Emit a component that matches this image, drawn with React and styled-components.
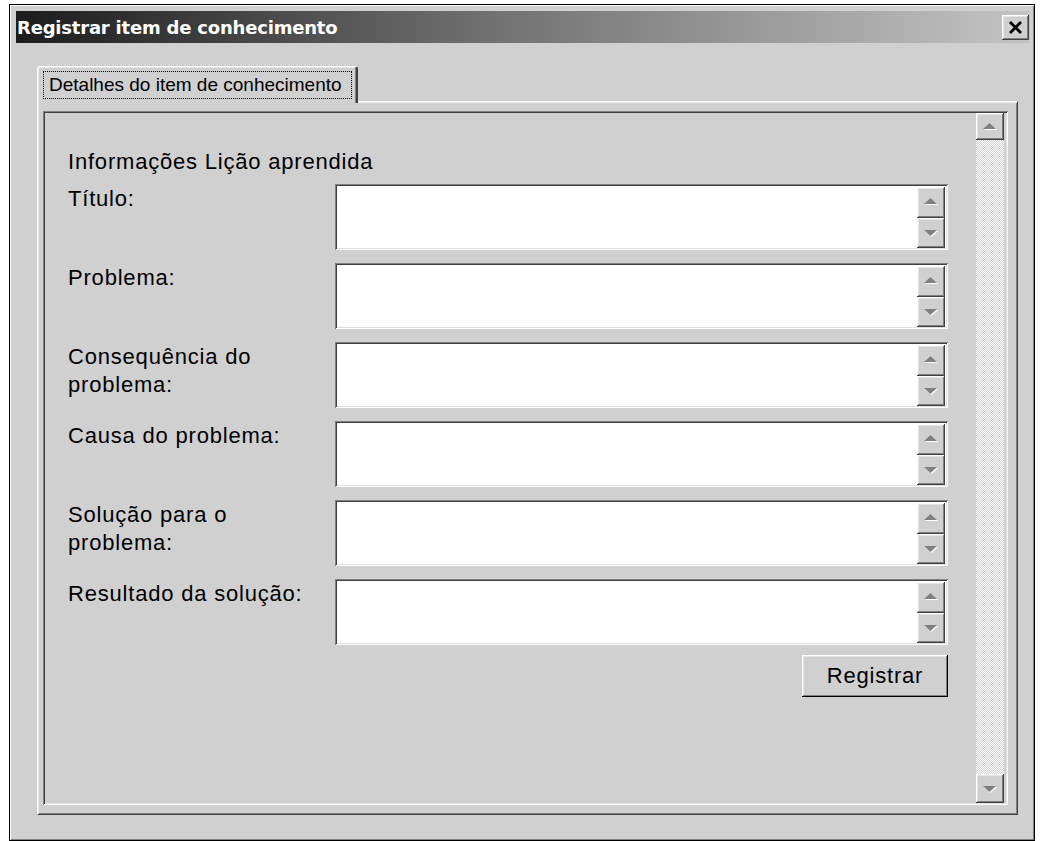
import React from "react";
import styled, { createGlobalStyle, css } from "styled-components";

const FACE = "#d0d0d0";
const LIGHT = "#ffffff";
const SHADOW = "#808080";
const DARK = "#404040";

const GlobalStyle = createGlobalStyle`
    html, body {
        margin: 0;
        padding: 0;
        background: #ffffff;
    }
    body {
        font-family: "Liberation Sans", Arial, sans-serif;
        color: #000;
    }
`;

const raised = css`
    background: ${FACE};
    box-shadow: inset -1px -1px ${DARK}, inset 1px 1px ${LIGHT},
        inset -2px -2px ${SHADOW}, inset 2px 2px #e4e4e4;
`;

const sunken = css`
    box-shadow: inset 1px 1px ${SHADOW}, inset -1px -1px ${LIGHT},
        inset 2px 2px ${DARK}, inset -2px -2px #e0e0e0;
`;

const Window = styled.div`
    box-sizing: border-box;
    margin: 4px 0 0 9px;
    width: 1026px;
    height: 837px;
    border: 1px solid #000;
    background: ${FACE};
    box-shadow: inset 1px 1px ${LIGHT}, inset -1px -1px ${SHADOW};
    padding: 6px 4px 6px 6px;
    display: flex;
    flex-direction: column;
`;

const TitleBar = styled.div`
    height: 32px;
    display: flex;
    align-items: center;
    justify-content: space-between;
    padding: 0 1px 0 1px;
    background: linear-gradient(to right, #1c1c1c 0%, #6e6e6e 45%, #c4c4c4 100%);
`;

const Title = styled.span`
    font-family: "DejaVu Sans", sans-serif;
    font-weight: bold;
    font-size: 18px;
    color: #fff;
    letter-spacing: -0.2px;
`;

const CloseButton = styled.button`
    ${raised};
    width: 27px;
    height: 25px;
    border: none;
    padding: 0;
    display: flex;
    align-items: center;
    justify-content: center;
`;

const Body = styled.div`
    flex: 1;
    display: flex;
    flex-direction: column;
    padding: 23px 12px 19px 21px;
`;

const TabStrip = styled.div`
    display: flex;
    position: relative;
    z-index: 1;
    margin-bottom: -2px;
`;

const Tab = styled.div`
    box-sizing: border-box;
    width: 321px;
    height: 37px;
    padding: 4px 4px 4px 5px;
    background: ${FACE};
    border-top: 1px solid ${LIGHT};
    border-left: 1px solid ${LIGHT};
    border-right: 2px solid ${DARK};
    border-top-left-radius: 3px;
    border-top-right-radius: 3px;
    box-shadow: inset 1px 1px #e8e8e8, inset -1px 0 ${SHADOW};
`;

const FocusRect = styled.div`
    box-sizing: border-box;
    height: 28px;
    border: 1px dotted #000;
    display: flex;
    align-items: center;
    padding-left: 5px;
    font-size: 19px;
    white-space: nowrap;
`;

const Panel = styled.div`
    flex: 1;
    display: flex;
    box-sizing: border-box;
    border-top: 1px solid ${LIGHT};
    border-left: 1px solid ${LIGHT};
    border-right: 1px solid ${DARK};
    border-bottom: 1px solid ${DARK};
    box-shadow: inset 1px 1px #e8e8e8, inset -1px -1px ${SHADOW};
    padding: 9px 9px 9px 5px;
`;

const ScrollFrame = styled.div`
    ${sunken};
    flex: 1;
    display: flex;
    padding: 2px 4px 2px 2px;
`;

const Content = styled.div`
    flex: 1;
    padding: 35px 0 0 23px;
    font-size: 22px;
    letter-spacing: 0.8px;
    line-height: 28px;
`;

const Heading = styled.div`
    margin-bottom: 8px;
`;

const Form = styled.div`
    display: grid;
    grid-template-columns: 267px 613px;
    row-gap: 13px;
`;

const Label = styled.div`
    padding-top: 1px;
`;

const TextBox = styled.div`
    ${sunken};
    background: #fff;
    height: 66px;
    display: flex;
    justify-content: flex-end;
    padding: 3px 3px 2px 2px;
    box-sizing: border-box;
`;

const SpinColumn = styled.div`
    width: 28px;
    display: flex;
    flex-direction: column;
`;

const ArrowButton = styled.div`
    ${raised};
    flex: ${(p) => (p.$flex ? 1 : "none")};
    height: ${(p) => (p.$height ? `${p.$height}px` : "auto")};
    display: flex;
    align-items: center;
    justify-content: center;
`;

const Actions = styled.div`
    grid-column: 2;
    display: flex;
    justify-content: flex-end;
    margin-top: -3px;
`;

const PushButton = styled.button`
    ${raised};
    box-shadow: inset -1px -1px #000, inset 1px 1px ${LIGHT},
        inset -2px -2px ${SHADOW}, inset 2px 2px #e4e4e4;
    width: 146px;
    height: 42px;
    border: none;
    font-family: "Liberation Sans", Arial, sans-serif;
    font-size: 22px;
    letter-spacing: 0.8px;
    color: #000;
    padding: 0;
`;

const ScrollBar = styled.div`
    width: 28px;
    display: flex;
    flex-direction: column;
`;

const Track = styled.div`
    flex: 1;
    background-color: ${LIGHT};
    background-image: repeating-conic-gradient(${FACE} 0% 25%, ${LIGHT} 0% 50%);
    background-size: 2px 2px;
`;

// disabled arrow: grey triangle with a white drop shadow
const Arrow = ({ down }) => (
    <svg width="16" height="10" viewBox="0 0 16 10">
        {down ? (
            <>
                <polygon points="2,3 15,3 8.5,9" fill={LIGHT} />
                <polygon points="1,2 14,2 7.5,8" fill={SHADOW} />
            </>
        ) : (
            <>
                <polygon points="8.5,2 15,8 2,8" fill={LIGHT} />
                <polygon points="7.5,1 14,7 1,7" fill={SHADOW} />
            </>
        )}
    </svg>
);

const CloseGlyph = () => (
    <svg width="15" height="13" viewBox="0 0 15 13">
        <path d="M2 1 L13 12 M13 1 L2 12" stroke="#000" strokeWidth="2.8" />
    </svg>
);

const fields = [
    ["Título:"],
    ["Problema:"],
    ["Consequência do", "problema:"],
    ["Causa do problema:"],
    ["Solução para o", "problema:"],
    ["Resultado da solução:"],
];

const App = () => (
    <>
        <GlobalStyle />
        <Window>
            <TitleBar>
                <Title>Registrar item de conhecimento</Title>
                <CloseButton aria-label="Fechar">
                    <CloseGlyph />
                </CloseButton>
            </TitleBar>
            <Body>
                <TabStrip>
                    <Tab>
                        <FocusRect>Detalhes do item de conhecimento</FocusRect>
                    </Tab>
                </TabStrip>
                <Panel>
                    <ScrollFrame>
                        <Content>
                            <Heading>Informações Lição aprendida</Heading>
                            <Form>
                                {fields.map((lines) => (
                                    <React.Fragment key={lines[0]}>
                                        <Label>
                                            {lines.map((line) => (
                                                <div key={line}>{line}</div>
                                            ))}
                                        </Label>
                                        <TextBox>
                                            <SpinColumn>
                                                <ArrowButton $flex>
                                                    <Arrow />
                                                </ArrowButton>
                                                <ArrowButton $flex>
                                                    <Arrow down />
                                                </ArrowButton>
                                            </SpinColumn>
                                        </TextBox>
                                    </React.Fragment>
                                ))}
                                <Actions>
                                    <PushButton>Registrar</PushButton>
                                </Actions>
                            </Form>
                        </Content>
                        <ScrollBar>
                            <ArrowButton $height={27}>
                                <Arrow />
                            </ArrowButton>
                            <Track />
                            <ArrowButton $height={29}>
                                <Arrow down />
                            </ArrowButton>
                        </ScrollBar>
                    </ScrollFrame>
                </Panel>
            </Body>
        </Window>
    </>
);

export default App;
